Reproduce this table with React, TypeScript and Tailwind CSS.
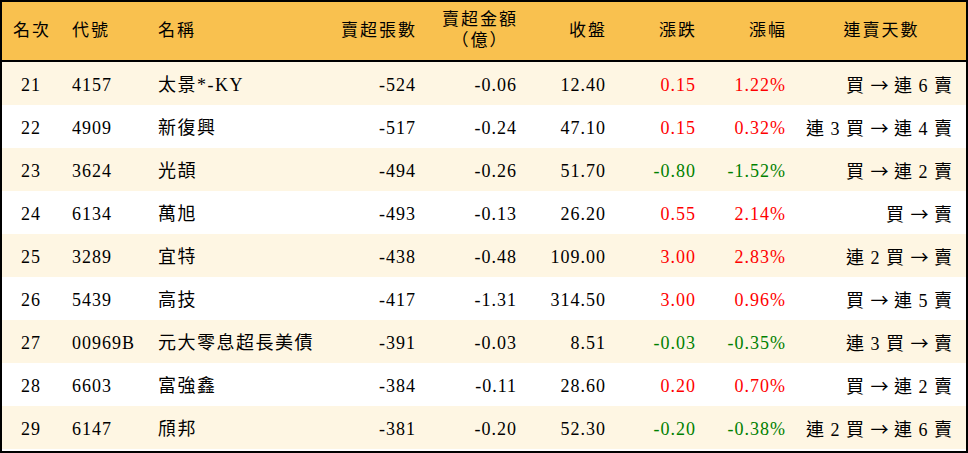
import React from "react"

type Row = {
  rank: number
  code: string
  name: string
  lots: string
  amount: string
  close: string
  change: string
  pct: string
  streak: string
}

const rows: Row[] = [
  { rank: 21, code: "4157", name: "太景*-KY", lots: "-524", amount: "-0.06", close: "12.40", change: "0.15", pct: "1.22%", streak: "買 → 連 6 賣" },
  { rank: 22, code: "4909", name: "新復興", lots: "-517", amount: "-0.24", close: "47.10", change: "0.15", pct: "0.32%", streak: "連 3 買 → 連 4 賣" },
  { rank: 23, code: "3624", name: "光頡", lots: "-494", amount: "-0.26", close: "51.70", change: "-0.80", pct: "-1.52%", streak: "買 → 連 2 賣" },
  { rank: 24, code: "6134", name: "萬旭", lots: "-493", amount: "-0.13", close: "26.20", change: "0.55", pct: "2.14%", streak: "買 → 賣" },
  { rank: 25, code: "3289", name: "宜特", lots: "-438", amount: "-0.48", close: "109.00", change: "3.00", pct: "2.83%", streak: "連 2 買 → 賣" },
  { rank: 26, code: "5439", name: "高技", lots: "-417", amount: "-1.31", close: "314.50", change: "3.00", pct: "0.96%", streak: "買 → 連 5 賣" },
  { rank: 27, code: "00969B", name: "元大零息超長美債", lots: "-391", amount: "-0.03", close: "8.51", change: "-0.03", pct: "-0.35%", streak: "連 3 買 → 賣" },
  { rank: 28, code: "6603", name: "富強鑫", lots: "-384", amount: "-0.11", close: "28.60", change: "0.20", pct: "0.70%", streak: "買 → 連 2 賣" },
  { rank: 29, code: "6147", name: "頎邦", lots: "-381", amount: "-0.20", close: "52.30", change: "-0.20", pct: "-0.38%", streak: "連 2 買 → 連 6 賣" },
]

const cols = "grid grid-cols-[58px_86px_154px_127px_101px_89px_90px_90px_1fr]"

// render the arrow with a full-width glyph, the rest stays as plain text
function Streak({ text }: { text: string }) {
  const [before, after] = text.split("→")
  return (
    <>
      {before}
      <span style={{ fontFamily: '"Noto Sans CJK TC", sans-serif' }} className="tracking-normal">→</span>
      {after}
    </>
  )
}

export default function App() {
  return (
    <div
      className="w-[968px] h-[453px] bg-white text-black border-2 border-black text-[18px] tracking-[1px]"
      style={{ fontFamily: '"Liberation Serif", "Noto Sans CJK TC", serif' }}
    >
      {/* Header */}
      <div className={`${cols} h-[60px] items-center bg-[#f9c14f] border-b-2 border-black text-[17px] tracking-[2px]`}>
        <div className="text-center pl-[2px]">名次</div>
        <div className="pl-3">代號</div>
        <div className="pl-3">名稱</div>
        <div className="text-right pr-[10px]">賣超張數</div>
        <div className="text-right pr-[10px]">
          <span className="inline-block text-center leading-[21px]">
            賣超金額
            <br />
            （億）
          </span>
        </div>
        <div className="text-right pr-[10px]">收盤</div>
        <div className="text-right pr-[10px]">漲跌</div>
        <div className="text-right pr-[10px]">漲幅</div>
        <div className="text-center">連賣天數</div>
      </div>

      {/* Rows */}
      {rows.map((r, i) => {
        const up = !r.change.startsWith("-")
        const color = up ? "text-[#ff0000]" : "text-[#008000]"
        return (
          <div
            key={r.rank}
            className={`${cols} h-[43px] pt-[3px] items-center ${i % 2 === 0 ? "bg-[#fef6e3]" : "bg-white"}`}
          >
            <div className="text-center">{r.rank}</div>
            <div className="pl-3">{r.code}</div>
            <div className="pl-3 whitespace-nowrap tracking-[1.5px]">{r.name}</div>
            <div className="text-right pr-[11px]">{r.lots}</div>
            <div className="text-right pr-[11px]">{r.amount}</div>
            <div className="text-right pr-[11px]">{r.close}</div>
            <div className={`text-right pr-[11px] ${color}`}>{r.change}</div>
            <div className={`text-right pr-[11px] ${color}`}>{r.pct}</div>
            <div className="text-right pr-[13px] whitespace-nowrap">
              <Streak text={r.streak} />
            </div>
          </div>
        )
      })}
    </div>
  )
}
